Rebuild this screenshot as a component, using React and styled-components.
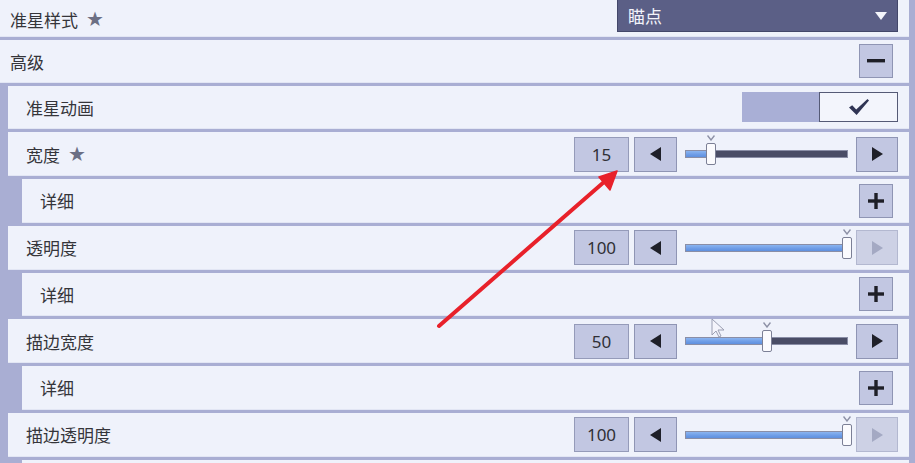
import React from "react";
import styled, { createGlobalStyle } from "styled-components";

const GlobalStyle = createGlobalStyle`
  html, body { margin: 0; padding: 0; }
  body {
    background: #a9aed3;
    overflow: hidden;
    font-family: "Noto Sans", "Noto Sans CJK SC", sans-serif;
  }
`;

const Page = styled.div`
  position: relative;
  width: 915px;
  height: 463px;
  overflow: hidden;
  background: #a9aed3;
`;

const Panel = styled.div`
  display: flex;
  flex-direction: column;
  gap: 3px;
  padding-right: 6px;
`;

const Row = styled.div`
  display: flex;
  align-items: ${(p) => (p.$top ? "flex-start" : "center")};
  height: ${(p) => p.$h || 43.75}px;
  flex-shrink: 0;
  margin-left: ${(p) => [0, 8, 22][p.$level || 0]}px;
  padding-left: ${(p) => (p.$level ? 18 : 10)}px;
  padding-right: 11px;
  background: #eff2fb;
  box-shadow: inset 0 -1px 0 #e2e6f4;
`;

const Label = styled.span`
  flex: 1;
  display: flex;
  align-items: center;
  gap: 8px;
  font-family: "Noto Sans CJK SC", sans-serif;
  font-size: 17px;
  color: #35353a;
  line-height: 1;
  padding-top: ${(p) => (p.$top ? 9 : 0)}px;
`;

const Star = styled.span`
  font-size: 20px;
  line-height: 1;
  color: #6c6f84;
  font-family: "DejaVu Sans", sans-serif;
`;

const Dropdown = styled.div`
  width: 281px;
  height: 32px;
  box-sizing: border-box;
  background: #5b5f86;
  border: 1px solid #43476a;
  border-top: none;
  display: flex;
  align-items: center;
  justify-content: space-between;
  padding: 0 10px 0 10px;
  color: #f2f3fa;
  font-family: "Noto Sans CJK SC", sans-serif;
  font-size: 17px;
`;

const Caret = styled.span`
  width: 0;
  height: 0;
  border-left: 6px solid transparent;
  border-right: 6px solid transparent;
  border-top: 8px solid #f4f5fb;
`;

const SquareBtn = styled.div`
  width: 34px;
  height: 34px;
  box-sizing: border-box;
  margin-right: 5px;
  background: #c2c7e2;
  border: 1px solid #8f95b4;
  display: flex;
  align-items: center;
  justify-content: center;
`;

const Toggle = styled.div`
  display: flex;
  width: 156px;
  height: 30px;
`;

const ToggleFill = styled.div`
  flex: 1;
  background: #a9afd6;
`;

const ToggleBox = styled.div`
  flex: 1;
  box-sizing: border-box;
  background: #f3f5fc;
  border: 1.5px solid #555a76;
  display: flex;
  align-items: center;
  justify-content: center;
`;

const SliderGroup = styled.div`
  display: flex;
  align-items: center;
`;

const ValueBox = styled.div`
  width: 55px;
  height: 35px;
  box-sizing: border-box;
  background: #c2c7e2;
  border: 1px solid #959bb9;
  display: flex;
  align-items: center;
  justify-content: center;
  font-family: "Noto Sans", sans-serif;
  font-size: 17px;
  color: #303036;
  margin-right: 5px;
`;

const ArrowBtn = styled.div`
  width: ${(p) => p.$w}px;
  height: 35px;
  box-sizing: border-box;
  background: ${(p) => (p.$disabled ? "#cdd1e5" : "#c2c7e2")};
  border: 1px solid ${(p) => (p.$disabled ? "#b3b8d0" : "#8f95b4")};
  display: flex;
  align-items: center;
  justify-content: center;
`;

const Tri = styled.span`
  width: 0;
  height: 0;
  border-top: 7px solid transparent;
  border-bottom: 7px solid transparent;
  ${(p) =>
    p.$dir === "left"
      ? `border-right: 11px solid ${p.$disabled ? "#a4a9c3" : "#1f2029"};`
      : `border-left: 11px solid ${p.$disabled ? "#a4a9c3" : "#1f2029"};`}
`;

const Track = styled.div`
  position: relative;
  width: 163px;
  height: 8px;
  margin: 0 8px;
  box-sizing: border-box;
  background: #4a4d66;
  border: 1px solid #8a8ea6;
`;

const TrackFill = styled.div`
  position: absolute;
  left: 0;
  top: 0;
  bottom: 0;
  background: linear-gradient(180deg, #8ab4f0 0%, #6d9ce6 60%, #5f90de 100%);
`;

const Thumb = styled.div`
  position: absolute;
  top: -8px;
  width: 10px;
  height: 22px;
  box-sizing: border-box;
  margin-left: -5px;
  background: #fbfbfe;
  border: 1px solid #7c8096;
  border-radius: 2px;
`;

const Marker = styled.svg`
  position: absolute;
  top: -16px;
  margin-left: -4px;
`;

const Overlay = styled.svg`
  position: absolute;
  left: 0;
  top: 0;
  pointer-events: none;
`;

function Slider({ value }) {
  const pos = 1 + (value / 100) * 160;
  return (
    <SliderGroup>
      <ValueBox>{value}</ValueBox>
      <ArrowBtn $w={43}>
        <Tri $dir="left" />
      </ArrowBtn>
      <Track>
        <TrackFill style={{ width: pos }} />
        <Marker width="8" height="6" viewBox="0 0 8 6" style={{ left: pos }}>
          <path d="M0.5 0.5 L4 5 L7.5 0.5" fill="none" stroke="#8d91a6" strokeWidth="1.4" />
        </Marker>
        <Thumb style={{ left: pos }} />
      </Track>
      <ArrowBtn $w={42} $disabled={value >= 100}>
        <Tri $dir="right" $disabled={value >= 100} />
      </ArrowBtn>
    </SliderGroup>
  );
}

function PlusBtn() {
  return (
    <SquareBtn>
      <svg width="18" height="18" viewBox="0 0 18 18">
        <rect x="7.3" y="1" width="3.4" height="16" fill="#1e1f27" />
        <rect x="1" y="7.3" width="16" height="3.4" fill="#1e1f27" />
      </svg>
    </SquareBtn>
  );
}

export default function App() {
  return (
    <Page>
      <GlobalStyle />
      <Panel>
        <Row $h={36.5} $top>
          <Label $top>
            准星样式 <Star>★</Star>
          </Label>
          <Dropdown>
            瞄点
            <Caret />
          </Dropdown>
        </Row>
        <Row $h={43}>
          <Label>高级</Label>
          <SquareBtn>
            <svg width="18" height="4" viewBox="0 0 18 4">
              <rect x="0" y="0" width="18" height="3.4" fill="#1e1f27" />
            </svg>
          </SquareBtn>
        </Row>
        <Row $level={1}>
          <Label>准星动画</Label>
          <Toggle>
            <ToggleFill />
            <ToggleBox>
              <svg width="22" height="18" viewBox="0 0 22 18">
                <path d="M1 9.5 L4.2 7.2 L8.2 11.6 L19.5 1 L21 2.6 L8.6 17 Z" fill="#2f3454" />
              </svg>
            </ToggleBox>
          </Toggle>
        </Row>
        <Row $level={1}>
          <Label>
            宽度 <Star>★</Star>
          </Label>
          <Slider value={15} />
        </Row>
        <Row $level={2}>
          <Label>详细</Label>
          <PlusBtn />
        </Row>
        <Row $level={1}>
          <Label>透明度</Label>
          <Slider value={100} />
        </Row>
        <Row $level={2}>
          <Label>详细</Label>
          <PlusBtn />
        </Row>
        <Row $level={1}>
          <Label>描边宽度</Label>
          <Slider value={50} />
        </Row>
        <Row $level={2}>
          <Label>详细</Label>
          <PlusBtn />
        </Row>
        <Row $level={1}>
          <Label>描边透明度</Label>
          <Slider value={100} />
        </Row>
        <Row $level={2} />
      </Panel>
      <Overlay width="915" height="463" viewBox="0 0 915 463">
        <line x1="439" y1="326" x2="604" y2="182" stroke="#e8212a" strokeWidth="4" strokeLinecap="round" />
        <polygon points="617,171 599,177 610,190" fill="#e8212a" stroke="#e8212a" strokeWidth="1.5" strokeLinejoin="round" />
        <path
          d="M712 319 L712 335 L716 331 L719 337 L721 336 L718 330 L724 330 Z"
          fill="#f4f5fa"
          fillOpacity="0.85"
          stroke="#9a9eb2"
          strokeWidth="1"
        />
      </Overlay>
    </Page>
  );
}
